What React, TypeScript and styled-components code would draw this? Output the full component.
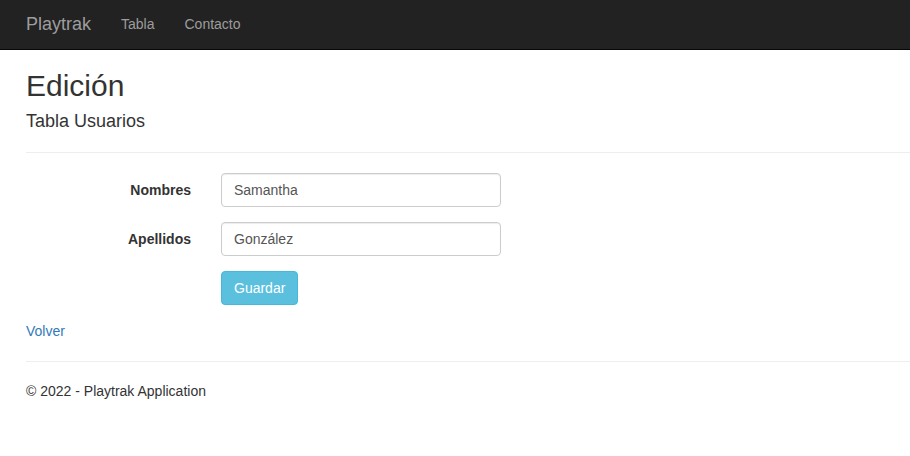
import React from "react";
import styled, { createGlobalStyle } from "styled-components";

const Global = createGlobalStyle`
  html, body { margin: 0; padding: 0; }
  body {
    font-family: "Liberation Sans", Arial, Helvetica, sans-serif;
    font-size: 14px;
    line-height: 1.428571;
    color: #333;
    background: #fff;
  }
  * { box-sizing: border-box; }
`;

const Navbar = styled.nav`
  height: 50px;
  background: #222;
  border-bottom: 1px solid #080808;
  display: flex;
  align-items: center;
  padding-left: 11px;
  padding-bottom: 1px;
`;

const Brand = styled.a`
  font-size: 18px;
  line-height: 20px;
  padding: 15px;
  color: #9d9d9d;
  text-decoration: none;
`;

const NavLink = styled.a`
  font-size: 14px;
  line-height: 20px;
  padding: 15px;
  color: #9d9d9d;
  text-decoration: none;
`;

const Body = styled.main`
  padding-left: 26px;
`;

const Title = styled.h2`
  font-size: 30px;
  font-weight: 500;
  line-height: 1.1;
  margin: 19px 0 10px;
`;

const Subtitle = styled.h4`
  font-size: 18px;
  font-weight: 500;
  line-height: 1.1;
  margin: 10px 0 10px;
`;

const Rule = styled.hr`
  border: 0;
  border-top: 1px solid #eee;
  margin: 20px 0;
`;

const Form = styled.form`
  display: grid;
  grid-template-columns: 165px 280px;
  column-gap: 30px;
  row-gap: 15px;
  margin-bottom: 16px;
`;

const Label = styled.label`
  text-align: right;
  font-weight: bold;
  padding-top: 7px;
  line-height: 20px;
`;

const Input = styled.input`
  width: 280px;
  height: 34px;
  padding: 6px 12px;
  font-family: inherit;
  font-size: 14px;
  color: #555;
  border: 1px solid #ccc;
  border-radius: 4px;
  box-shadow: inset 0 1px 1px rgba(0, 0, 0, 0.075);
  outline: none;
`;

const Button = styled.button`
  grid-column: 2;
  justify-self: start;
  height: 34px;
  padding: 6px 12px;
  font-family: inherit;
  font-size: 14px;
  line-height: 20px;
  color: #fff;
  background: #5bc0de;
  border: 1px solid #46b8da;
  border-radius: 4px;
`;

const BackLink = styled.a`
  display: block;
  color: #337ab7;
  text-decoration: none;
  line-height: 20px;
`;

const Footer = styled.footer`
  p { margin: 0 0 10px; }
`;

export default function App() {
  return (
    <>
      <Global />
      <Navbar>
        <Brand href="#">Playtrak</Brand>
        <NavLink href="#">Tabla</NavLink>
        <NavLink href="#">Contacto</NavLink>
      </Navbar>
      <Body>
        <Title>Edición</Title>
        <Subtitle>Tabla Usuarios</Subtitle>
        <Rule />
        <Form onSubmit={(e) => e.preventDefault()}>
          <Label htmlFor="nombres">Nombres</Label>
          <Input id="nombres" defaultValue="Samantha" />
          <Label htmlFor="apellidos">Apellidos</Label>
          <Input id="apellidos" defaultValue="González" />
          <Button type="submit">Guardar</Button>
        </Form>
        <BackLink href="#">Volver</BackLink>
        <Rule />
        <Footer>
          <p>© 2022 - Playtrak Application</p>
        </Footer>
      </Body>
    </>
  );
}
